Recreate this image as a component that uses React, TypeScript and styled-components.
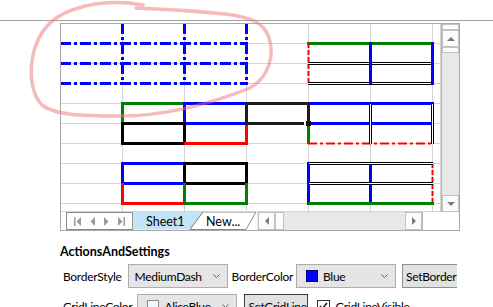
import styled, { createGlobalStyle } from "styled-components";

const GlobalStyle = createGlobalStyle`
  html, body { margin: 0; padding: 0; background: #fff; }
  body {
    font-family: Lato, "Segoe UI", "Noto Sans", sans-serif;
    font-size: 12px;
    color: #000;
    overflow: hidden;
  }
`;

const Page = styled.div`
  position: relative;
  width: 493px;
  height: 307px;
  overflow: hidden;
`;

const TopRule = styled.div`
  height: 20px;
  border-bottom: 1px solid #a0a0a0;
`;

const Body = styled.div`
  padding: 2px 0 0 60px;
`;

const SheetControl = styled.div`
  width: 398px;
  height: 206px;
  border: 1px solid #a9a9a9;
  display: grid;
  grid-template-columns: 380px 18px;
  grid-template-rows: 188px 18px;
`;

const CellArea = styled.div`
  position: relative;
  overflow: hidden;
`;

const CellGrid = styled.div`
  display: grid;
  grid-template-columns: repeat(6, 62px) 8px;
  grid-template-rows: repeat(9, 20px) 8px;
`;

const Cell = styled.div`
  box-sizing: border-box;
  border-right: 1px solid #d4d4d4;
  border-bottom: 1px solid #d4d4d4;
`;

const BorderLayer = styled.svg`
  position: absolute;
  left: 0;
  top: 0;
  pointer-events: none;
`;

const VScroll = styled.div`
  display: flex;
  flex-direction: column;
  background: #e8e8e8;
  border-left: 1px solid #b4b4b4;
  width: 17px;
`;

const ScrollPiece = styled.div<{ $size: number }>`
  flex: 0 0 ${(p) => p.$size}px;
  box-sizing: border-box;
  background: #fcfcfc;
  border: 1px solid #c2c2c2;
  display: flex;
  align-items: center;
  justify-content: center;
`;

const Track = styled.div`
  flex: 1;
`;

const BottomBar = styled.div`
  display: flex;
  height: 18px;
`;

const TabStrip = styled.div`
  display: flex;
  width: 191px;
  padding-left: 5px;
  align-items: stretch;
`;

const NavBox = styled.div`
  box-sizing: border-box;
  width: 67px;
  border: 1px solid #8a8a8a;
  border-right-color: #9a9a9a;
  display: flex;
  align-items: center;
  justify-content: space-around;
  padding: 0 4px;
`;

const Tab = styled.div<{ $width: number; $overlap: number }>`
  position: relative;
  width: ${(p) => p.$width}px;
  margin-left: ${(p) => -p.$overlap}px;
  display: flex;
  align-items: center;
  padding-left: ${(p) => (p.$overlap ? 16 : 13)}px;
  box-sizing: border-box;
  font-size: 12.5px;
  color: #000;
  svg {
    position: absolute;
    left: 0;
    top: 0;
  }
  span {
    position: relative;
  }
`;

const HScroll = styled.div`
  flex: 1;
  display: flex;
  background: #e8e8e8;
  padding-left: 1px;
`;

const HPiece = styled.div<{ $size: number }>`
  flex: 0 0 ${(p) => p.$size}px;
  box-sizing: border-box;
  background: #fcfcfc;
  border: 1px solid #c2c2c2;
  display: flex;
  align-items: center;
  justify-content: center;
`;

const Corner = styled.div`
  width: 18px;
  background: #fff;
  border-left: 1px solid #b4b4b4;
`;

const Settings = styled.div`
  padding-top: 13px;
`;

const Heading = styled.div`
  font-weight: 700;
  font-size: 12.5px;
  line-height: 16px;
  margin-bottom: 4px;
`;

const Row = styled.div`
  display: flex;
  align-items: center;
  height: 24px;
  padding-left: 3px;
  margin-bottom: 6px;
  width: 394px;
  overflow: hidden;
  font-size: 12px;
  letter-spacing: -0.3px;
`;

const Label = styled.span<{ $gap: number }>`
  margin-right: ${(p) => p.$gap}px;
  white-space: nowrap;
`;

const Combo = styled.div<{ $gap: number }>`
  flex: 0 0 100px;
  height: 24px;
  box-sizing: border-box;
  border: 1px solid #adadad;
  background: #e5e5e5;
  display: flex;
  align-items: center;
  padding: 0 7px 0 6px;
  margin-right: ${(p) => p.$gap}px;
`;

const ComboText = styled.span<{ $clip?: number }>`
  flex: 1;
  overflow: hidden;
  white-space: nowrap;
  ${(p) => (p.$clip ? `flex: 0 0 ${p.$clip}px; margin-right: auto;` : "")}
`;

const Swatch = styled.span<{ $color: string }>`
  flex: 0 0 10px;
  height: 10px;
  border: 1px solid ${(p) => (p.$color === "#0000ff" ? "#00008b" : "#8c8c8c")};
  background: ${(p) => p.$color};
  margin: 0 5px 0 3px;
`;

const Button = styled.div<{ $width: number; $dark?: boolean }>`
  flex: 0 0 ${(p) => p.$width}px;
  height: 24px;
  box-sizing: border-box;
  border: 1px solid ${(p) => (p.$dark ? "#3c3c3c" : "#8f8f8f")};
  background: #e1e1e1;
  display: flex;
  align-items: center;
  padding-left: 3px;
  overflow: hidden;
  white-space: nowrap;
  margin-right: 9px;
`;

const Check = styled.span`
  flex: 0 0 13px;
  height: 13px;
  box-sizing: border-box;
  border: 1px solid #333;
  display: flex;
  align-items: center;
  justify-content: center;
  margin-right: 5px;
`;

const Annotation = styled.svg`
  position: absolute;
  left: 0;
  top: 0;
  pointer-events: none;
`;

type Seg = [number, number, number, number];

const h = (y: number, x1: number, x2: number): Seg => [x1, y + 0.5, x2, y + 0.5];
const v = (x: number, y1: number, y2: number): Seg => [x + 0.5, y1, x + 0.5, y2];

const BLUE = "#0000ff";
const GREEN = "#008000";
const RED = "#ff0000";
const BLACK = "#000000";

const lines: { seg: Seg; color: string; w: number; dash?: string }[] = [
  // blue medium dash dot block
  ...[43, 63, 83].map((y) => ({ seg: h(y, 60, 248), color: BLUE, w: 3, dash: "11 3 3 3" })),
  ...[122, 184, 246].map((x) => ({ seg: v(x, 23, 85), color: BLUE, w: 3, dash: "11 3 3 3" })),
  // E2:F3
  { seg: h(43, 307, 434), color: GREEN, w: 3 },
  { seg: v(308, 43, 84), color: RED, w: 2, dash: "5 2" },
  // B5:C6
  { seg: h(103, 121, 185), color: GREEN, w: 3 },
  { seg: v(122, 102, 124), color: GREEN, w: 3 },
  { seg: h(103, 184, 247), color: BLUE, w: 3 },
  { seg: v(184, 102, 124), color: BLUE, w: 3 },
  { seg: h(123, 184, 247), color: BLUE, w: 3 },
  { seg: h(123, 121, 185), color: BLACK, w: 3 },
  { seg: v(122, 122, 145), color: BLACK, w: 3 },
  { seg: v(184, 122, 145), color: BLACK, w: 3 },
  { seg: h(143, 121, 185), color: BLACK, w: 3 },
  { seg: v(246, 122, 145), color: RED, w: 3 },
  { seg: h(143, 184, 247), color: RED, w: 3 },
  // E5:F6
  { seg: h(103, 308, 434), color: BLUE, w: 3 },
  { seg: h(123, 308, 434), color: BLUE, w: 3 },
  { seg: v(308, 123, 144), color: GREEN, w: 3 },
  { seg: h(143, 308, 433), color: RED, w: 2, dash: "9 3 3 3" },
  // B8:C9
  { seg: h(163, 121, 185), color: BLUE, w: 3 },
  { seg: v(122, 162, 184), color: BLUE, w: 3 },
  { seg: h(183, 121, 185), color: BLUE, w: 3 },
  { seg: h(163, 184, 248), color: BLACK, w: 3 },
  { seg: v(184, 162, 184), color: BLACK, w: 3 },
  { seg: v(246, 162, 184), color: BLACK, w: 3 },
  { seg: h(183, 184, 248), color: BLACK, w: 3 },
  { seg: v(122, 183, 205), color: RED, w: 3 },
  { seg: h(203, 121, 185), color: RED, w: 3 },
  { seg: v(184, 183, 205), color: GREEN, w: 3 },
  { seg: v(246, 183, 205), color: GREEN, w: 3 },
  { seg: h(203, 184, 248), color: GREEN, w: 3 },
  // E8:F9
  { seg: v(308, 162, 205), color: BLUE, w: 3 },
  { seg: v(370, 162, 205), color: BLUE, w: 3 },
  { seg: v(432, 163, 203), color: RED, w: 2, dash: "5 2" },
  { seg: h(203, 308, 434), color: GREEN, w: 3 },
];

const doubles: { dir: "h" | "v"; at: number; from: number; to: number }[] = [
  { dir: "h", at: 63, from: 308, to: 433 },
  { dir: "h", at: 83, from: 308, to: 433 },
  { dir: "v", at: 370, from: 104, to: 144 },
  { dir: "v", at: 432, from: 104, to: 144 },
  { dir: "h", at: 163, from: 309, to: 433 },
  { dir: "h", at: 183, from: 309, to: 433 },
];

const lateLines: { seg: Seg; color: string; w: number }[] = [
  { seg: v(370, 42, 84), color: BLUE, w: 3 },
  { seg: v(432, 42, 85), color: BLUE, w: 3 },
];

function SegLine({ seg, color, w, dash }: { seg: Seg; color: string; w: number; dash?: string }) {
  return (
    <line
      x1={seg[0]}
      y1={seg[1]}
      x2={seg[2]}
      y2={seg[3]}
      stroke={color}
      strokeWidth={w}
      strokeDasharray={dash}
    />
  );
}

function DoubleLine({ dir, at, from, to }: { dir: "h" | "v"; at: number; from: number; to: number }) {
  const offs = [-1, 1];
  if (dir === "h") {
    return (
      <g>
        <line x1={from} y1={at + 0.5} x2={to} y2={at + 0.5} stroke="#fff" strokeWidth={1} />
        {offs.map((o) => (
          <line key={o} x1={from} y1={at + o + 0.5} x2={to} y2={at + o + 0.5} stroke={BLACK} strokeWidth={1} />
        ))}
      </g>
    );
  }
  return (
    <g>
      <line x1={at + 0.5} y1={from} x2={at + 0.5} y2={to} stroke="#fff" strokeWidth={1} />
      {offs.map((o) => (
        <line key={o} x1={at + o + 0.5} y1={from} x2={at + o + 0.5} y2={to} stroke={BLACK} strokeWidth={1} />
      ))}
    </g>
  );
}

function Triangle({ dir }: { dir: "up" | "down" | "left" | "right" }) {
  const pts = {
    up: "0,4 4,0 8,4",
    down: "0,0 8,0 4,4",
    left: "4,0 4,8 0,4",
    right: "0,0 0,8 4,4",
  }[dir];
  const vertical = dir === "up" || dir === "down";
  return (
    <svg width={vertical ? 8 : 4} height={vertical ? 4 : 8} viewBox={vertical ? "0 0 8 4" : "0 0 4 8"}>
      <polygon points={pts} fill="#7a7a7a" />
    </svg>
  );
}

function NavIcon({ kind }: { kind: "first" | "prev" | "next" | "last" }) {
  return (
    <svg width="8" height="9" viewBox="0 0 8 9">
      {kind === "first" && <rect x="0" y="0" width="1.5" height="9" fill="#9a9a9a" />}
      {(kind === "first" || kind === "prev") && <polygon points="7,0 7,9 2.5,4.5" fill="#9a9a9a" />}
      {(kind === "next" || kind === "last") && <polygon points="1,0 1,9 5.5,4.5" fill="#9a9a9a" />}
      {kind === "last" && <rect x="6.5" y="0" width="1.5" height="9" fill="#9a9a9a" />}
    </svg>
  );
}

function Chevron() {
  return (
    <svg width="7" height="4" viewBox="0 0 7 4">
      <polyline points="0.5,0.5 3.5,3.5 6.5,0.5" fill="none" stroke="#606060" strokeWidth="1" />
    </svg>
  );
}

export default function App() {
  const cells = Array.from({ length: 70 });
  return (
    <Page>
      <GlobalStyle />
      <TopRule />
      <Body>
        <SheetControl>
          <CellArea>
            <CellGrid>
              {cells.map((_, i) => (
                <Cell key={i} />
              ))}
            </CellGrid>
            <BorderLayer width="380" height="188" viewBox="61 24 380 188">
              {lines.map((l, i) => (
                <SegLine key={i} {...l} />
              ))}
              {doubles.map((d, i) => (
                <DoubleLine key={i} {...d} />
              ))}
              {lateLines.map((l, i) => (
                <SegLine key={i} {...l} />
              ))}
              {/* current cell */}
              <rect x="246.5" y="103.5" width="62" height="20" fill="none" stroke="#1c1c1c" strokeWidth="3" />
              <rect x="304" y="121" width="3" height="4" fill="#fff" />
              <rect x="306" y="121" width="5" height="5" fill="#111" />
            </BorderLayer>
          </CellArea>
          <VScroll>
            <ScrollPiece $size={6} />
            <ScrollPiece $size={17}>
              <Triangle dir="up" />
            </ScrollPiece>
            <ScrollPiece $size={6} />
            <Track />
            <ScrollPiece $size={17}>
              <Triangle dir="down" />
            </ScrollPiece>
          </VScroll>
          <BottomBar>
            <TabStrip>
              <NavBox>
                <NavIcon kind="first" />
                <NavIcon kind="prev" />
                <NavIcon kind="next" />
                <NavIcon kind="last" />
              </NavBox>
              <Tab $width={70} $overlap={0}>
                <svg width="70" height="18">
                  <polygon points="0,0 70,0 57,17.5 0,17.5" fill="#c3e4f7" />
                  <line x1="57" y1="17.5" x2="70" y2="0" stroke="#7a7a7a" strokeWidth="1" />
                </svg>
                <span>Sheet1</span>
              </Tab>
              <Tab $width={66} $overlap={13}>
                <svg width="66" height="18">
                  <polygon points="13,0 66,0 56,17.5 0,17.5" fill="#fff" />
                  <polyline points="0,17.5 13,0 66,0 56,17.5 0,17.5" fill="none" stroke="#8a8a8a" strokeWidth="1" />
                </svg>
                <span>New...</span>
              </Tab>
            </TabStrip>
            <HScroll>
              <HPiece $size={17}>
                <Triangle dir="left" />
              </HPiece>
              <HPiece $size={9} />
              <Track />
              <HPiece $size={17}>
                <Triangle dir="right" />
              </HPiece>
            </HScroll>
            <Corner />
          </BottomBar>
        </SheetControl>
        <Settings>
          <Heading>ActionsAndSettings</Heading>
          <Row>
            <Label $gap={6}>BorderStyle</Label>
            <Combo $gap={4}>
              <ComboText $clip={67}>MediumDashDot</ComboText>
              <Chevron />
            </Combo>
            <Label $gap={3}>BorderColor</Label>
            <Combo $gap={6}>
              <Swatch $color="#0000ff" />
              <ComboText>Blue</ComboText>
              <Chevron />
            </Combo>
            <Button $width={60}>SetBorder</Button>
          </Row>
          <Row>
            <Label $gap={5}>GridLineColor</Label>
            <Combo $gap={7}>
              <Swatch $color="#f0f8ff" />
              <ComboText>AliceBlue</ComboText>
              <Chevron />
            </Combo>
            <Button $width={64} $dark>
              SetGridLine
            </Button>
            <Check>
              <svg width="9" height="8" viewBox="0 0 9 8">
                <polyline points="1,4 3.5,6.5 8,1" fill="none" stroke="#222" strokeWidth="1.6" />
              </svg>
            </Check>
            <span>GridLineVisible</span>
          </Row>
        </Settings>
      </Body>
      <Annotation width="493" height="307">
        <path
          d="M143,5 C120,1 95,2 72,10 C52,17 38,32 33,55 C29,75 32,95 42,105 C55,115 80,116 120,116 C170,116 215,102 250,88 C268,78 276,55 268,35 C262,22 250,17 225,14 C195,11 165,9 136,8"
          fill="none"
          stroke="rgba(235, 120, 120, 0.5)"
          strokeWidth="3.5"
          strokeLinecap="round"
        />
      </Annotation>
    </Page>
  );
}
